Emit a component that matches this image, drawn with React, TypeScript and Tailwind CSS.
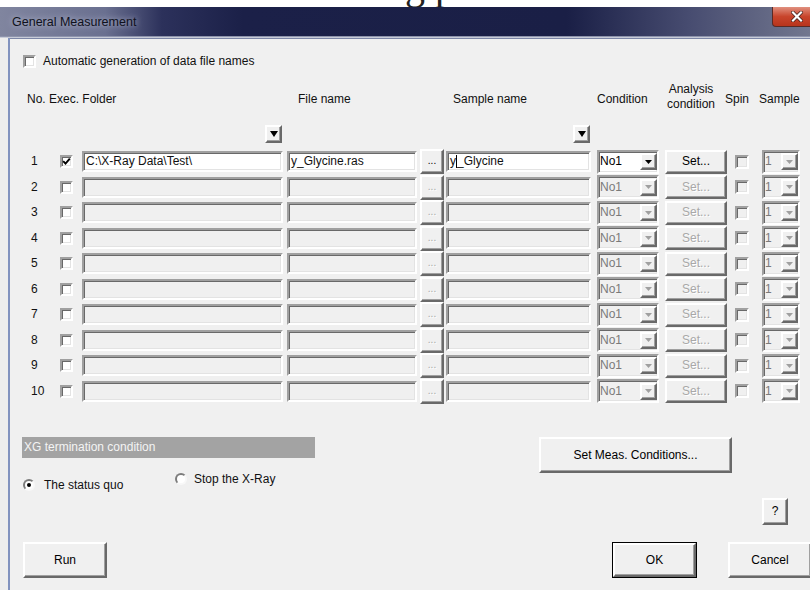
import React from 'react';

// classic 3D edges used by every control in the dialog
const raised =
  'bg-[#f0f0f0] border-2 border-t-white border-l-white border-r-[#696969] border-b-[#696969] shadow-[inset_-1px_-1px_0_#a0a0a0]';
const sunken =
  'border-2 border-t-[#a0a0a0] border-l-[#a0a0a0] border-r-white border-b-white shadow-[inset_1px_1px_0_#696969,inset_-1px_-1px_0_#e3e3e3]';

const Tri: React.FC<{ color: string; w?: number; h?: number }> = ({ color, w = 7, h = 4 }) => (
  <svg width={w} height={h} viewBox={`0 0 ${w} ${h}`}>
    <path d={`M0 0H${w}L${w / 2} ${h}Z`} fill={color} />
  </svg>
);

const CheckBox: React.FC<{ checked?: boolean; disabled?: boolean; className?: string }> = ({
  checked,
  disabled,
  className = '',
}) => (
  <div
    className={`w-[13px] h-[13px] shrink-0 flex items-center justify-center ${sunken} ${
      disabled ? 'bg-[#f0f0f0]' : 'bg-white'
    } ${className}`}
  >
    {checked && (
      <svg width="9" height="9" viewBox="0 0 9 9">
        <path d="M1.2 4.2l2.3 2.4L7.8 1.6" stroke="#000" strokeWidth="1.9" fill="none" />
      </svg>
    )}
  </div>
);

const Radio: React.FC<{ checked?: boolean }> = ({ checked }) => (
  <div className="w-[12px] h-[12px] shrink-0 rounded-full border-2 border-t-[#7c7c7c] border-l-[#7c7c7c] border-r-[#f8f8f8] border-b-[#f8f8f8] bg-white flex items-center justify-center">
    {checked && <div className="w-[4px] h-[4px] rounded-full bg-black" />}
  </div>
);

const Field: React.FC<{ value?: string; enabled?: boolean; className: string; caretAfter?: number }> = ({
  value = '',
  enabled,
  className,
  caretAfter,
}) => (
  <div
    className={`h-[21px] shrink-0 flex items-center pl-[2px] overflow-hidden whitespace-nowrap ${sunken} ${
      enabled ? 'bg-white' : 'bg-[#f0f0f0]'
    } ${className}`}
  >
    {caretAfter !== undefined ? (
      <>
        {value.slice(0, caretAfter)}
        <span className="inline-block w-[1px] h-[13px] bg-black" />
        {value.slice(caretAfter)}
      </>
    ) : (
      value
    )}
  </div>
);

const Combo: React.FC<{ value: string; enabled?: boolean; className: string }> = ({ value, enabled, className }) => (
  <div
    className={`h-[24px] shrink-0 flex items-center justify-between pl-[1px] ${sunken} ${
      enabled ? 'bg-white text-black' : 'bg-[#f0f0f0] text-[#7a7a7a]'
    } ${className}`}
  >
    <span>{value}</span>
    <div className={`w-[17px] h-[17px] flex items-center justify-center ${raised}`}>
      <Tri color={enabled ? '#000' : '#a0a0a0'} />
    </div>
  </div>
);

const Button: React.FC<{ label: string; enabled?: boolean; className: string }> = ({
  label,
  enabled = true,
  className,
}) => (
  <div
    className={`shrink-0 flex items-center justify-center ${raised} ${
      enabled ? 'text-black' : 'text-[#a8a8a8] [text-shadow:1px_1px_0_#fff]'
    } ${className}`}
  >
    {label}
  </div>
);

const DataRow: React.FC<{ n: number }> = ({ n }) => {
  const on = n === 1;
  return (
    <div className="h-[25.5px] flex items-center">
      <span className="ml-[21px] w-[29px] shrink-0">{n}</span>
      <CheckBox checked={on} />
      <Field className="ml-[9px] w-[201px]" enabled={on} value={on ? 'C:\\X-Ray Data\\Test\\' : ''} />
      <Field className="ml-[4px] w-[130px]" enabled={on} value={on ? 'y_Glycine.ras' : ''} />
      <Button className="ml-[3px] w-[24px] h-[25px] text-[10px] pb-[2px]" enabled={on} label="..." />
      <Field
        className="ml-[2px] w-[145px]"
        enabled={on}
        value={on ? 'y_Glycine' : ''}
        caretAfter={on ? 1 : undefined}
      />
      <Combo className="ml-[6px] w-[62px]" enabled={on} value="No1" />
      <Button className="ml-[6px] w-[62px] h-[24px]" enabled={on} label="Set..." />
      <CheckBox className="ml-[8px] w-[14px] h-[14px]" disabled />
      <Combo className="ml-[13px] w-[38px]" value="1" />
    </div>
  );
};

export default function App() {
  return (
    <div className="w-[810px] h-[590px] overflow-hidden flex flex-col bg-white font-[Liberation_Sans,Arial,sans-serif] text-[12px] leading-[15px] text-[#111]">
      {/* tail of the document text behind the window */}
      <div className="h-[7px] shrink-0 overflow-hidden bg-white">
        <div className="ml-[405px] -mt-[30px] font-[Liberation_Serif,Times_New_Roman,serif] text-[40px] leading-[32px] text-[#222]">
          g p
        </div>
      </div>

      {/* title bar */}
      <div className="h-[30px] shrink-0 flex items-start border-b border-[#8e94ad] bg-[linear-gradient(to_right,#80859f_0%,#6a7090_13%,#2c315b_20%,#1b2048_30%,#1a1f46_70%,#474c70_85%,#72778f_100%)]">
        <span className="ml-[12px] mt-[8px] text-[12.5px] text-[#0f111c] [text-shadow:0_0_6px_#c8cce0]">
          General Measurement
        </span>
        <div className="ml-auto -mr-[12px] w-[50px] h-[20px] shrink-0 flex items-center justify-center rounded-b-[4px] border border-t-0 border-[#5a2a24] bg-[linear-gradient(to_bottom,#e0907f,#c8452c_50%,#b8341c)]">
          <svg width="12" height="11" viewBox="0 0 12 11">
            <path d="M2 1.5l8 8M10 1.5l-8 8" stroke="#3a1a16" strokeWidth="3.6" strokeLinecap="square" />
            <path d="M2 1.5l8 8M10 1.5l-8 8" stroke="#fff" strokeWidth="2.2" strokeLinecap="square" />
          </svg>
        </div>
      </div>

      <div className="h-[1px] shrink-0 bg-[#c8ccd8]" />

      <div className="flex-1 flex min-h-0">
        {/* window frame */}
        <div className="w-[8px] shrink-0 bg-[#eeeeee]" />
        <div className="w-[2px] shrink-0 bg-[#8293bf]" />

        {/* client area */}
        <div className="flex-1 flex flex-col bg-[#f0f0f0] border-t border-[#7c86a6]">
          <div className="mt-[15px] h-[14px] flex items-center">
            <CheckBox className="ml-[13px]" />
            <span className="ml-[7px]">Automatic generation of data file names</span>
          </div>

          {/* column headers */}
          <div className="mt-[14px] h-[30px] flex items-start">
            <span className="ml-[17px] w-[22px] mt-[10px] shrink-0">No.</span>
            <span className="w-[249px] mt-[10px] shrink-0">Exec. Folder</span>
            <span className="w-[155px] mt-[10px] shrink-0">File name</span>
            <span className="w-[144px] mt-[10px] shrink-0">Sample name</span>
            <span className="w-[65px] mt-[10px] shrink-0">Condition</span>
            <span className="w-[63px] pr-[5px] shrink-0 text-center">
              Analysis
              <br />
              condition
            </span>
            <span className="w-[34px] mt-[10px] shrink-0">Spin</span>
            <span className="mt-[10px] shrink-0">Sample</span>
          </div>

          <div className="mt-[13px] h-[18px] flex">
            <div className={`ml-[255px] w-[17px] h-[18px] flex items-center justify-center ${raised} border-r-[#303030] border-b-[#303030]`}>
              <Tri color="#000" w={8} h={6} />
            </div>
            <div className={`ml-[291px] w-[17px] h-[18px] flex items-center justify-center ${raised} border-r-[#303030] border-b-[#303030]`}>
              <Tri color="#000" w={8} h={6} />
            </div>
          </div>

          <div className="mt-[6px] flex flex-col">
            {Array.from({ length: 10 }, (_, i) => (
              <DataRow key={i} n={i + 1} />
            ))}
          </div>

          {/* termination + measurement conditions */}
          <div className="mt-[33px] flex items-start">
            <div className="ml-[12px] w-[293px] shrink-0 flex flex-col">
              <div className="h-[21px] flex items-center pl-[2px] bg-[#a3a3a3] text-[#f4f4f4]">
                XG termination condition
              </div>
              <div className="mt-[15px] flex items-start">
                <div className="ml-[1px] w-[152px] shrink-0 mt-[6px] h-[12px] flex items-center">
                  <Radio checked />
                  <span className="ml-[9px]">The status quo</span>
                </div>
                <div className="h-[12px] flex items-center">
                  <Radio />
                  <span className="ml-[7px]">Stop the X-Ray</span>
                </div>
              </div>
            </div>
            <Button className="ml-[224px] w-[193px] h-[36px]" label="Set Meas. Conditions..." />
          </div>

          <div className="mt-[7px] flex">
            <Button className="ml-[752px] w-[26px] h-[27px]" label="?" />
          </div>

          <div className="mt-[17px] flex">
            <Button className="ml-[13px] w-[84px] h-[36px]" label="Run" />
            <div className="ml-[505px] w-[85px] h-[36px] shrink-0 border border-black">
              <Button className="w-full h-full" label="OK" />
            </div>
            <Button className="ml-[31px] w-[84px] h-[36px]" label="Cancel" />
          </div>
        </div>
      </div>
    </div>
  );
}
